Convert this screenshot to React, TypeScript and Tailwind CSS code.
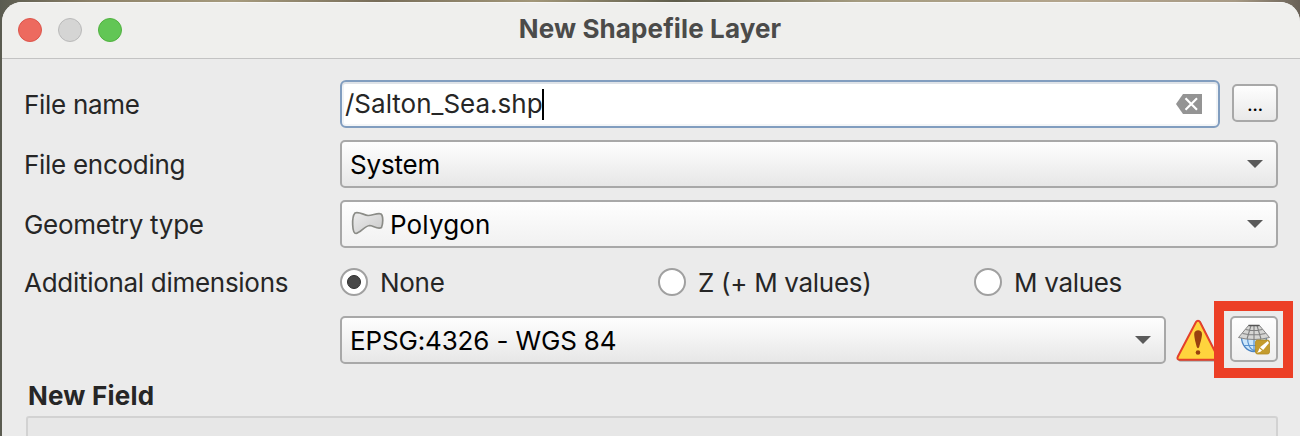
import type { ReactNode } from "react";

function Caret() {
  return (
    <svg className="ml-auto mr-[13px] block h-[10px] w-[16px]" viewBox="0 0 16 10">
      <path d="M0 1H16L8 9Z" fill="#5a5a5a" />
    </svg>
  );
}

function Select({ children, className }: { children: ReactNode; className: string }) {
  return (
    <div className={`flex h-[48px] items-center rounded-[5px] border-2 border-[#a8a8a8] bg-linear-to-b text-black ${className}`}>
      {children}
      <Caret />
    </div>
  );
}

function Radio({ label, checked, className }: { label: string; checked?: boolean; className: string }) {
  return (
    <div className={`flex items-center ${className}`}>
      <div className="flex size-[28px] shrink-0 items-center justify-center rounded-full border-2 border-[#a0a0a0] bg-white">
        {checked && <div className="size-[14px] rounded-full border border-[#2f2f2f] bg-[#484848]" />}
      </div>
      <span className="ml-[12px] pt-[2px] tracking-[-0.3px] whitespace-nowrap">{label}</span>
    </div>
  );
}

function PolygonIcon() {
  return (
    <svg className="mb-[2px] ml-[9px] block h-[24px] w-[34px]" viewBox="0 0 34 24">
      <defs>
        <linearGradient id="poly" x1="0" y1="0" x2="1" y2="1">
          <stop offset="0" stopColor="#ededed" />
          <stop offset="1" stopColor="#c9c9c9" />
        </linearGradient>
      </defs>
      <path
        d="M4 2C8 .5 13 4 17 4.500C21 4.700 27 1.500 30 3C32.500 5 32 13 30.500 16.500C27 19 22 14.500 18.500 14.500C14 15 9 22 5 22.500C1 22.500 .5 6 4 2Z"
        fill="url(#poly)"
        stroke="#8b8c87"
        strokeWidth="1.700"
      />
    </svg>
  );
}

function WarningIcon() {
  return (
    <svg className="block h-[44px] w-[46px] shrink-0" viewBox="0 0 46 44">
      <path d="M20 2.800C21 1 23.500 1 24.500 2.800L42 38C43 40 42 42 40 42H4C2 42 1 40 2 38Z" fill="#777" opacity=".75" transform="translate(.4 .4)" />
      <path d="M20 3C21 1.200 23 1.200 24 3L41.500 37.500C42.400 39.500 41.500 40.800 39.500 40.800H3.500C1.500 40.800 .9 39.500 1.900 37.500Z" fill="#ffd43d" stroke="#e4402b" strokeWidth="2" />
      <path d="M18.200 15C18.200 10 26 10 26 15C26 19 24 25 23.200 28C22.800 29.500 21.200 29.500 20.800 28C20 25 18.200 19 18.200 15Z" fill="#98400f" />
      <circle cx="22" cy="33.500" r="2.300" fill="#98400f" />
    </svg>
  );
}

function GlobeIcon() {
  return (
    <svg className="block h-[32px] w-[34px]" viewBox="0 0 34 32">
      <path d="M4.500 14C4.500 22 10 28.500 17 28.500C24 28.500 29.500 22 29.500 14Z" fill="#cbe6fb" stroke="#4a83c2" strokeWidth="1.300" />
      <path d="M17 14V28M10.500 14C10.500 21 13 26 17 28C21 26 23.500 21 23.500 14M6 22.500H28" fill="none" stroke="#5a93cf" strokeWidth="1.200" />
      <path d="M11.500 2.500H22.500L32.500 14.500Q17 18.500 1.500 14.500Z" fill="#d6d6d4" stroke="#858585" strokeWidth="1" />
      <path d="M8.500 6.500Q17 8.500 25.500 6.500M5.500 10.500Q17 13 28.500 10.500M14 2.500L10 16M20 2.500L24 16M17 2.500V16.500" fill="none" stroke="#808080" strokeWidth="1.100" />
      <path d="M11.500 2.500H22.500" stroke="#555" strokeWidth="1.500" />
      <rect x="18.500" y="17" width="14" height="14" rx="2" fill="#c49c2e" stroke="#b28b23" strokeWidth=".8" />
      <path d="M30.800 18L32 20L26.200 27L23 24.300Z" fill="#fff" />
      <path d="M22.300 25.200L25 27.500Q23.500 29.300 20 29.800Q21.800 28 22.300 25.200Z" fill="#fff" />
    </svg>
  );
}

function Label({ children }: { children: ReactNode }) {
  return <div className="w-[316px] shrink-0 pt-[2px] tracking-[-0.29px] whitespace-nowrap">{children}</div>;
}

export default function App() {
  return (
    <div className="h-[436px] w-[1300px] overflow-hidden bg-[linear-gradient(90deg,#5a5b50_0%,#8c8168_7%,#a69b7e_18%,#776d59_29%,#a29779_41%,#5f5d4c_52%,#a49b80_66%,#b3a58d_82%,#a79a85_95%,#696157_100%)] pt-[2px] pl-[2px] font-['Inter',sans-serif] text-[26px] leading-[30px] text-[#262626]">
      <div className="h-[434px] w-[1298px] overflow-hidden rounded-t-[20px] bg-[#ebebeb]">
        <div className="flex h-[57px] items-center border-b border-[#c3c3c3] bg-[#efefed] shadow-[inset_0_1px_0_#f8f8f7]">
          <div className="flex w-[400px] gap-[16px] pl-[16px]">
            <div className="size-[24px] rounded-full border border-[#dc554b] bg-[#ed6a5f]" />
            <div className="size-[24px] rounded-full border border-[#b9b9b9] bg-[#d5d5d4]" />
            <div className="size-[24px] rounded-full border border-[#50b13f] bg-[#62c655]" />
          </div>
          <div className="w-[496px] pb-[2px] text-center font-bold tracking-[0.12px] text-[#4b4b4a]">New Shapefile Layer</div>
        </div>

        <div className="pl-[22px]">
          <div className="mt-[21px] flex h-[48px] items-center">
            <Label>File name</Label>
            <div className="flex h-[48px] w-[880px] items-center rounded-[6px] border-2 border-[#819dbf] bg-white shadow-[inset_0_2px_0_#dfe3e8,inset_2px_0_0_#f0f3f6,inset_-2px_0_0_#f0f3f6,inset_0_-2px_0_#f4f6f8]">
              <span className="ml-[3px] whitespace-nowrap">/Salton_Sea.shp</span>
              <div className="-ml-px h-[31px] w-[2px] bg-black" />
              <svg className="mr-[16px] ml-auto block h-[20px] w-[26px]" viewBox="0 0 26 20">
                <path d="M0 10L7 0H26V20H7Z" fill="#949494" />
                <path d="M9.500 4.200L21 15.800M21 4.200L9.500 15.800" stroke="#fff" strokeWidth="2.200" />
              </svg>
            </div>
            <div className="mb-[2px] ml-[12px] flex h-[38px] w-[46px] items-center justify-center rounded-[5px] border-2 border-[#a8a8a8] bg-linear-to-b from-[#fefefe] to-[#e9e9e9] pt-[2px] text-[20px] leading-none tracking-[-0.5px] text-black">...</div>
          </div>
          <div className="mt-[12px] flex h-[48px] items-center">
            <Label>File encoding</Label>
            <Select className="w-[938px] from-[#fefefe] to-[#e7e7e7]"><span className="ml-[8px] pt-[2px] tracking-[-0.2px]">System</span></Select>
          </div>
          <div className="mt-[12px] flex h-[48px] items-center">
            <Label>Geometry type</Label>
            <Select className="w-[938px] from-[#fefefe] to-[#f1f1f1]"><PolygonIcon /><span className="ml-[5px] pt-[2px] tracking-[0.15px]">Polygon</span></Select>
          </div>
          <div className="mt-[20px] flex h-[28px] items-center">
            <Label>Additional dimensions</Label>
            <Radio label="None" checked className="w-[318px]" />
            <Radio label="Z (+ M values)" className="w-[316px]" />
            <Radio label="M values" className="w-[200px]" />
          </div>
          <div className="mt-[5px] flex h-[77px] items-start">
            <div className="w-[316px]" />
            <Select className="mt-[15px] w-[826px] from-[#fefefe] to-[#e7e7e7]"><span className="ml-[8px] pt-[2px] tracking-[-0.15px]">EPSG:4326 - WGS 84</span></Select>
            <div className="mt-[18px] ml-[10px] w-[38px]"><WarningIcon /></div>
            <div className="relative flex h-[77px] w-[79px] justify-center border-[10px] border-[#ec3f26] bg-[#ebebeb] pt-[5px]">
              <div className="flex h-[46px] w-[48px] items-center justify-center rounded-[5px] border-2 border-[#a8a8a8] bg-linear-to-b from-[#fefefe] to-[#efefef]"><GlobeIcon /></div>
            </div>
          </div>
          <div className="mt-[3px] ml-[4px] font-bold tracking-[0.2px]">New Field</div>
          <div className="mt-[5px] ml-[2px] h-[40px] w-[1252px] rounded-t-[3px] border-2 border-[#d2d2d2] bg-[#e7e7e7]" />
        </div>
      </div>
    </div>
  );
}
